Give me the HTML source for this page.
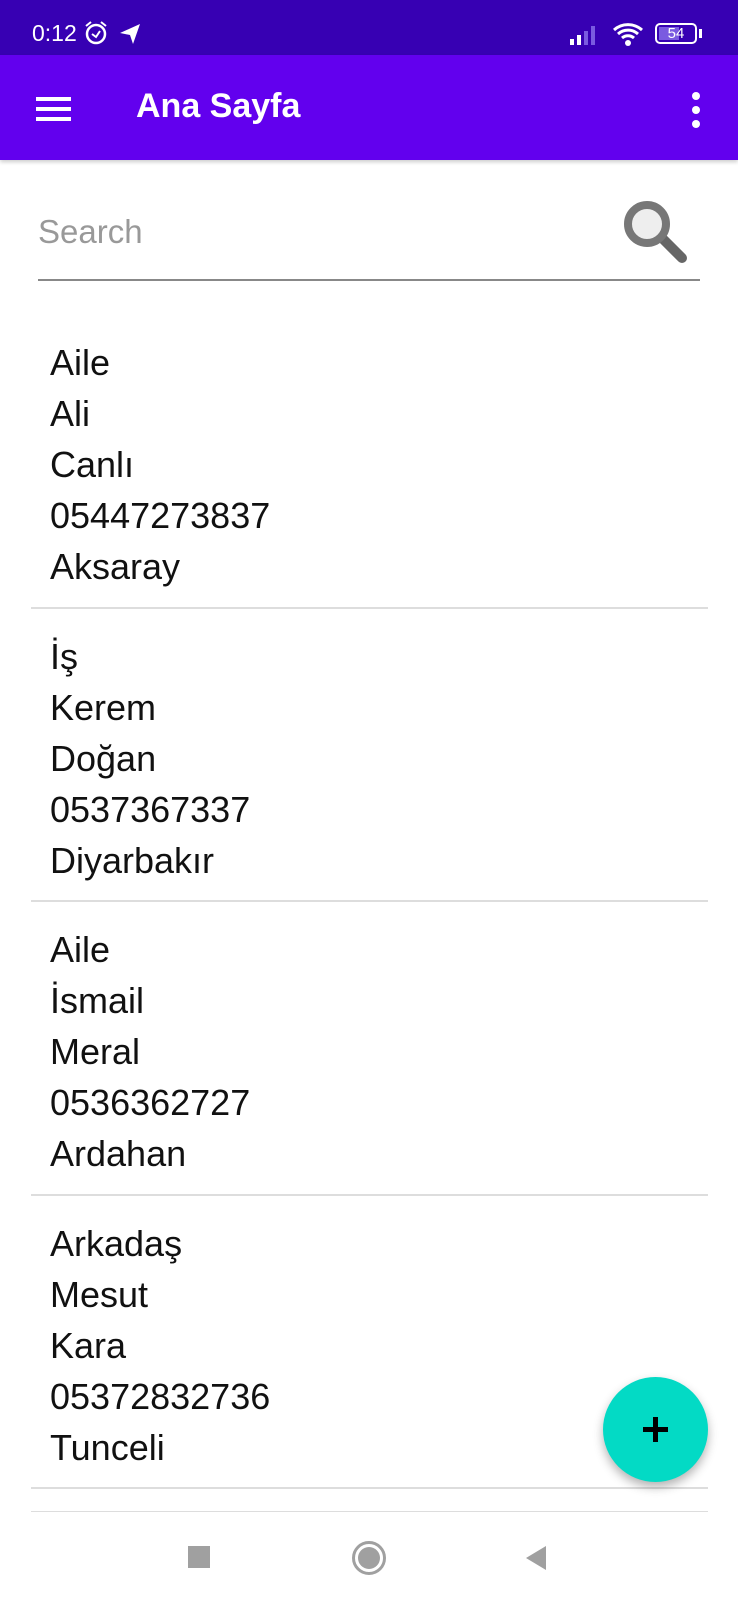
<!DOCTYPE html>
<html><head><meta charset="utf-8"><style>
*{margin:0;padding:0;box-sizing:border-box}
body{width:738px;height:1600px;background:#fff;font-family:"Liberation Sans",Roboto,sans-serif;position:relative;overflow:hidden}
.sb{position:absolute;left:0;top:0;width:738px;height:55px;background:#3700b3;color:#fff}
.ab{position:absolute;left:0;top:55px;width:738px;height:105px;background:#6200ee;box-shadow:0 2px 4px rgba(0,0,0,.2)}
.t{position:absolute;color:#fff;font-size:34px;font-weight:bold;left:136px;top:32px}
.item{position:absolute;left:50px;font-size:36px;line-height:51px;color:#111}
.div{position:absolute;left:31px;width:677px;height:2px;background:#ddd}
</style></head><body>
<div class="sb">
<div style="position:absolute;left:32px;top:20px;font-size:23px">0:12</div>
<svg style="position:absolute;left:84px;top:20px" width="24" height="26" viewBox="0 0 24 26"><circle cx="12" cy="14" r="9" fill="none" stroke="#fff" stroke-width="2.5"/><path d="M8 14l4 3 4-6M2 6l5-4M22 6l-5-4" stroke="#fff" stroke-width="2" fill="none"/></svg>
<svg style="position:absolute;left:118px;top:22px" width="24" height="24" viewBox="0 0 24 24"><path d="M2 11L22 2 15 22 12 13z" fill="#fff"/></svg>
<svg style="position:absolute;left:568px;top:22px" width="36" height="24" viewBox="0 0 36 24"><rect x="2" y="17" width="4" height="6" fill="#fff"/><rect x="9" y="13" width="4" height="10" fill="#fff"/><rect x="16" y="9" width="4" height="14" fill="#7a5be0"/><rect x="23" y="4" width="4" height="19" fill="#7a5be0"/></svg>
<svg style="position:absolute;left:612px;top:20px" width="34" height="28" viewBox="0 0 34 28"><path d="M2 10a21 21 0 0 1 28 0M6 14a15 15 0 0 1 20 0M10 18a9 9 0 0 1 12 0" stroke="#fff" stroke-width="3" fill="none"/><circle cx="16" cy="23" r="3" fill="#fff"/></svg>
<div style="position:absolute;left:655px;top:23px;width:42px;height:21px;border:2px solid #fff;border-radius:5px;font-size:15px;text-align:center;line-height:17px"><span style="position:absolute;left:2px;top:2px;width:20px;height:13px;background:#7a5be0"></span><span style="position:relative">54</span></div>
<div style="position:absolute;left:699px;top:29px;width:3px;height:9px;background:#fff"></div>
</div>
<div class="ab">
<div style="position:absolute;left:36px;top:42px;width:35px;height:4px;background:#fff"></div>
<div style="position:absolute;left:36px;top:52px;width:35px;height:4px;background:#fff"></div>
<div style="position:absolute;left:36px;top:62px;width:35px;height:4px;background:#fff"></div>
<div class="t">Ana Sayfa</div>
<div style="position:absolute;left:692px;top:37px;width:8px;height:8px;border-radius:50%;background:#fff"></div>
<div style="position:absolute;left:692px;top:51px;width:8px;height:8px;border-radius:50%;background:#fff"></div>
<div style="position:absolute;left:692px;top:65px;width:8px;height:8px;border-radius:50%;background:#fff"></div>
</div>
<div style="position:absolute;left:38px;top:213px;font-size:33px;color:#999">Search</div>
<svg style="position:absolute;left:620px;top:198px" width="70" height="68" viewBox="0 0 70 68"><line x1="40" y1="38" x2="62" y2="60" stroke="#666" stroke-width="10" stroke-linecap="round"/><circle cx="27" cy="26" r="19" fill="#eee" stroke="#777" stroke-width="8"/></svg>
<div style="position:absolute;left:38px;top:279px;width:662px;height:2px;background:#888"></div>

<div class="item" style="top:337px">Aile<br>Ali<br>Canlı<br>05447273837<br>Aksaray</div>
<div class="div" style="top:607px"></div>
<div class="item" style="top:631px">İş<br>Kerem<br>Doğan<br>0537367337<br>Diyarbakır</div>
<div class="div" style="top:900px"></div>
<div class="item" style="top:924px">Aile<br>İsmail<br>Meral<br>0536362727<br>Ardahan</div>
<div class="div" style="top:1194px"></div>
<div class="item" style="top:1218px">Arkadaş<br>Mesut<br>Kara<br>05372832736<br>Tunceli</div>
<div class="div" style="top:1487px"></div>
<div class="div" style="top:1511px;height:1px"></div>

<div style="position:absolute;left:603px;top:1377px;width:105px;height:105px;border-radius:50%;background:#03dac5;box-shadow:0 5px 10px rgba(0,0,0,.3)"></div>
<div style="position:absolute;left:643px;top:1427px;width:25px;height:5px;background:#000"></div>
<div style="position:absolute;left:653px;top:1417px;width:5px;height:25px;background:#000"></div>

<div style="position:absolute;left:188px;top:1546px;width:22px;height:22px;background:#a0a0a0"></div>
<div style="position:absolute;left:352px;top:1541px;width:34px;height:34px;border-radius:50%;border:3px solid #a0a0a0"><div style="position:absolute;left:3px;top:3px;width:22px;height:22px;border-radius:50%;background:#a0a0a0"></div></div>
<svg style="position:absolute;left:524px;top:1545px" width="24" height="26" viewBox="0 0 24 26"><path d="M22 1V25L2 13z" fill="#a0a0a0"/></svg>
</body></html>
